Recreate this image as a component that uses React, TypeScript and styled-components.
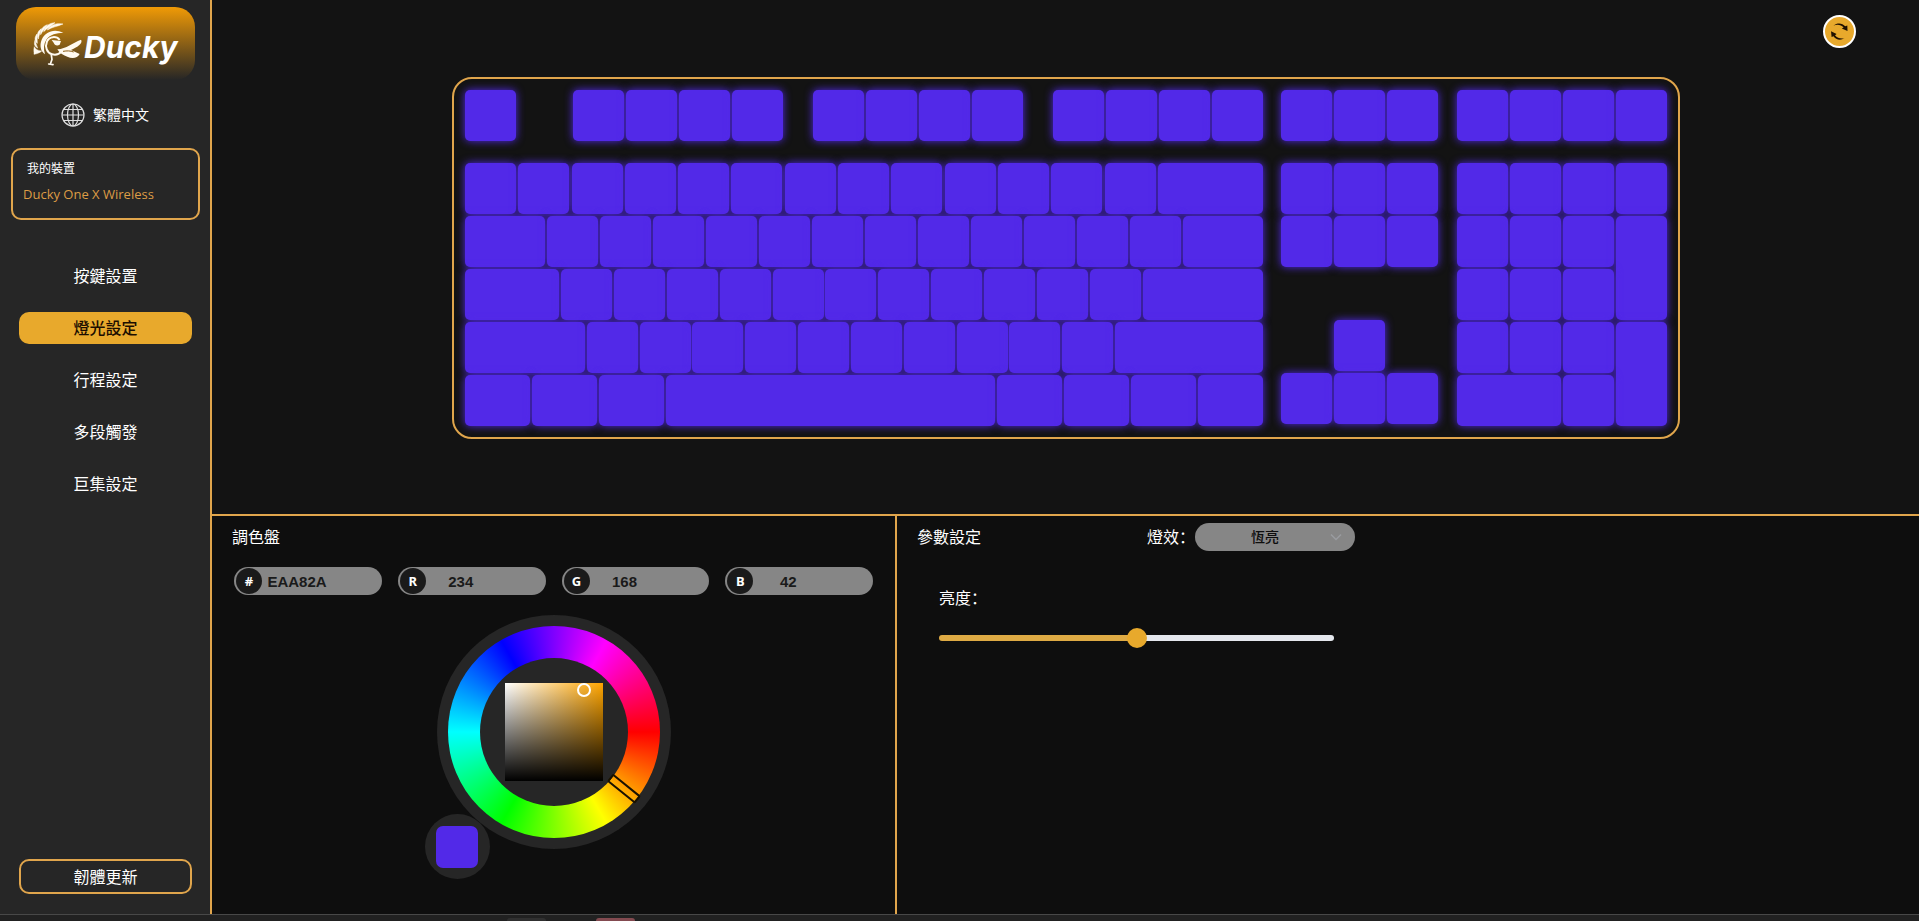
import React, { useState } from "react";
import styled, { createGlobalStyle } from "styled-components";

const ORANGE = "#e8a92c";
const LINE = "#e0a54c";
const KEY_COLOR = "#5229e8";
const LATIN = `"Noto Sans"`;

const GlobalStyle = createGlobalStyle`
  *, *::before, *::after { box-sizing: border-box; }
  body {
    margin: 0;
    background: #0e0e0e;
    color: #fff;
    font-family: ${LATIN}, "Noto Sans CJK TC", sans-serif;
    font-size: 16px;
    line-height: 24px;
  }
  button, input, select { font: inherit; color: inherit; margin: 0; }
  button { padding: 0; border: 0; cursor: pointer; }
`;

const Shell = styled.div`
  display: flex;
  flex-direction: column;
  min-height: 100vh;
`;

const Workspace = styled.div`
  flex: 1;
  display: flex;
`;

/* ---------- sidebar ---------- */

const Sidebar = styled.aside`
  flex: 0 0 212px;
  display: flex;
  flex-direction: column;
  align-items: stretch;
  background: #262626;
  border-right: 2px solid ${LINE};
  padding: 7px 0 20px;
`;

const Logo = styled.div`
  display: flex;
  align-items: center;
  gap: 2px;
  height: 73px;
  margin: 0 15px 0 16px;
  padding-left: 17px;
  border-radius: 20px;
  background: linear-gradient(#f09a06, #262626);
`;

const LogoName = styled.span`
  font: italic 700 30px/40px Inter, "Open Sans", sans-serif;
  padding-top: 6px;
`;

const Language = styled.button`
  display: flex;
  align-items: center;
  justify-content: center;
  gap: 8px;
  height: 24px;
  margin-top: 23px;
  background: none;
  font-size: 14px;
`;

const Device = styled.section`
  margin: 21px 10px 0 11px;
  height: 72px;
  padding: 7px 10px;
  border: 2px solid ${LINE};
  border-radius: 10px;
`;

const DeviceTitle = styled.h2`
  margin: 0 0 0 4px;
  font-size: 12px;
  font-weight: 400;
  line-height: 24px;
`;

const DeviceName = styled.p`
  margin: 0;
  color: #dd9c45;
  font-family: "Open Sans", sans-serif;
  font-size: 13px;
  line-height: 26px;
  white-space: nowrap;
`;

const Nav = styled.nav`
  display: flex;
  flex-direction: column;
  gap: 20px;
  margin: 40px 18px 0 19px;
`;

const NavItem = styled.a<{ $active?: boolean }>`
  height: 32px;
  border-radius: 10px;
  text-align: center;
  text-decoration: none;
  line-height: 32px;
  color: ${(p) => (p.$active ? "#1c0e00" : "#fff")};
  background: ${(p) => (p.$active ? ORANGE : "transparent")};
  font-weight: ${(p) => (p.$active ? 500 : 400)};
`;

const Firmware = styled.button`
  height: 35px;
  margin: auto 18px 0 19px;
  border: 2px solid ${LINE};
  border-radius: 10px;
  background: transparent;
`;

/* ---------- keyboard ---------- */

const Main = styled.main`
  flex: 1;
  min-width: 0;
  display: flex;
  flex-direction: column;
`;

const Stage = styled.section`
  position: relative;
  display: flex;
  justify-content: center;
  padding: 77px 16px 75px 17px;
  background: #131313;
`;

const Refresh = styled.button`
  position: absolute;
  top: 15px;
  right: 63px;
  width: 33px;
  height: 33px;
  display: grid;
  place-items: center;
  border: 2px solid #fff;
  border-radius: 50%;
  background: ${ORANGE};
`;

const Board = styled.div`
  display: flex;
  gap: 18px;
  padding: 11px;
  border: 2px solid ${LINE};
  border-radius: 20px;
`;

const Block = styled.div<{ $width: number }>`
  width: ${(p) => p.$width}px;
  display: flex;
  flex-direction: column;
  gap: 22px;
`;

const Rows = styled.div`
  display: flex;
  flex-direction: column;
  gap: 2px;
`;

const Row = styled.div`
  display: flex;
  justify-content: space-between;
`;

const Functions = styled.div`
  display: flex;
  gap: 30px;
`;

const FunctionGroup = styled.div`
  display: flex;
  gap: 2px;

  &:first-child { margin-right: 27px; }
`;

const PadGrid = styled.div<{ $columns: number }>`
  display: grid;
  grid-template-columns: repeat(${(p) => p.$columns}, 51px);
  grid-auto-rows: 51px;
  gap: 2px;
`;

const Arrows = styled(PadGrid)`
  margin-top: 31px;

  & > :first-child { grid-column: 2; }
  & > :nth-child(2) { grid-column: 1; }
`;

const Key = styled.button<{ $width?: number; $span?: string }>`
  flex: none;
  width: ${(p) => (p.$span ? "auto" : `${p.$width ?? 51}px`)};
  height: ${(p) => (p.$span ? "auto" : "51px")};
  grid-area: ${(p) => p.$span ?? "auto"};
  border-radius: 5px;
  background: ${KEY_COLOR};
  box-shadow: 0 0 8px ${KEY_COLOR};
`;

/* ---------- lower panels ---------- */

const Panels = styled.div`
  flex: 1;
  display: grid;
  grid-template-columns: minmax(685px, 40fr) 60fr;
  border-top: 2px solid ${LINE};
`;

const Panel = styled.section`
  display: flex;
  flex-direction: column;
  background: #0e0e0e;
`;

const PalettePanel = styled(Panel)`
  border-right: 2px solid ${LINE};
  padding: 9px 20px 28px;
`;

const PanelTitle = styled.h2`
  margin: 0;
  font-size: 16px;
  font-weight: 400;
  line-height: 24px;
`;

const Fields = styled.div`
  display: grid;
  grid-template-columns: repeat(4, 1fr);
  gap: 16px;
  margin: 18px 2px 0;
`;

const Field = styled.label`
  display: flex;
  align-items: center;
  height: 28px;
  padding: 1px 1px 1px 2px;
  border-radius: 14px;
  background: #868686;
`;

const FieldTag = styled.span`
  flex: 0 0 26px;
  height: 26px;
  border-radius: 50%;
  background: #1a1a1a;
  text-align: center;
  font-size: 13px;
  font-weight: 700;
  line-height: 26px;
`;

const FieldInput = styled.input`
  width: 70px;
  height: 26px;
  border: 0;
  padding: 0;
  outline: 0;
  background: transparent;
  color: #1a1a1a;
  text-align: center;
  font: 700 15px "Liberation Sans", sans-serif;
`;

const Wheel = styled.div`
  position: relative;
  display: grid;
  place-items: center;
  width: 234px;
  height: 234px;
  margin: 20px auto 0;
  border-radius: 50%;
  background: #262626;
`;

const HueRing = styled.div`
  display: grid;
  place-items: center;
  width: 212px;
  height: 212px;
  border-radius: 50%;
  background: conic-gradient(from 90deg, #f00, #ff0, #0f0, #0ff, #00f, #f0f, #f00);
`;

const WheelCore = styled.div`
  display: grid;
  place-items: center;
  width: 148px;
  height: 148px;
  border-radius: 50%;
  background: #262626;
`;

const Shade = styled.div`
  position: relative;
  width: 98px;
  height: 98px;
  background: linear-gradient(transparent, #000), linear-gradient(90deg, #fff, #ffa500);
`;

const ShadeCursor = styled.span`
  position: absolute;
  top: 0;
  left: 72px;
  width: 14px;
  height: 14px;
  border: 2px solid #fff;
  border-radius: 50%;
`;

const HueCursor = styled.span`
  position: absolute;
  top: 112px;
  left: 189px;
  width: 36px;
  height: 10px;
  border: 2px solid #1a1200;
  border-radius: 2px;
  transform-origin: -72px 50%;
  transform: rotate(39deg);
`;

const Swatch = styled.div`
  position: absolute;
  left: -12px;
  top: 199px;
  width: 65px;
  height: 65px;
  display: grid;
  place-items: center;
  border-radius: 50%;
  background: #262626;
`;

const SwatchColor = styled.button`
  width: 42px;
  height: 42px;
  border-radius: 7px;
  background: ${KEY_COLOR};
`;

const SettingsPanel = styled(Panel)`
  padding: 7px 20px;
`;

const SettingsHead = styled.div`
  display: flex;
  align-items: center;
  height: 28px;
`;

const SettingLabel = styled.label`
  font-family: ${LATIN}, "Noto Sans CJK SC", sans-serif;
  font-size: 16px;
  line-height: 24px;
`;

const EffectGroup = styled.div`
  display: flex;
  align-items: center;
  margin-left: 166px;
`;

const SelectBox = styled.div`
  position: relative;
`;

const EffectSelect = styled.select`
  appearance: none;
  display: block;
  width: 160px;
  height: 28px;
  padding: 0 20px 0 0;
  border: 0;
  border-radius: 14px;
  background: #868686;
  color: #0e0e0e;
  font-size: 14px;
  font-weight: 500;
  text-align: center;
  text-align-last: center;
`;

const Chevron = styled.svg`
  position: absolute;
  top: 8px;
  right: 13px;
  pointer-events: none;
`;

const Brightness = styled.div`
  display: flex;
  flex-direction: column;
  align-items: flex-start;
  gap: 18px;
  margin: 35px 22px 0;
`;

const Slider = styled.input`
  appearance: none;
  width: 395px;
  height: 20px;
  background: transparent;

  &::-webkit-slider-runnable-track {
    height: 6px;
    border-radius: 3px;
    background: linear-gradient(
      90deg,
      #deaa44 var(--level),
      #e4e7ed var(--level)
    );
  }
  &::-webkit-slider-thumb {
    appearance: none;
    width: 20px;
    height: 20px;
    margin-top: -7px;
    border-radius: 50%;
    background: ${ORANGE};
  }
`;

const Dock = styled.footer`
  display: flex;
  align-items: flex-end;
  gap: 50px;
  height: 7px;
  padding-left: 507px;
  border-top: 1px solid #484848;
  background: #212121;
`;

const DockTab = styled.span<{ $color: string }>`
  width: 39px;
  height: 3px;
  border-radius: 3px 3px 0 0;
  background: ${(p) => p.$color};
`;

/* ---------- drawings ---------- */

const DuckMark = () => (
  <svg width="49" height="44" viewBox="98 64 147 132" fill="#fffaf0" aria-hidden="true">
    <g stroke="#fffaf0" strokeWidth="1.5" strokeLinejoin="round">
      <path d="M188 70C166 66 148 74 141 88C155 79 170 78 188 70Z" />
      <path d="M164 66C146 67 133 78 130 93C141 82 152 76 164 66Z" />
      <path d="M141 72C126 77 119 90 121 102C127 90 134 83 141 72Z" />
      <path d="M123 84C111 92 108 105 114 115C116 103 119 97 123 84Z" />
      <path d="M110 100C102 110 102 121 111 128C110 118 111 110 110 100Z" />
      <path d="M104 119C100 130 103 138 112 142C108 133 107 128 104 119Z" />
      <path d="M102 138C99 148 102 155 101 161C111 159 119 156 124 151C112 150 106 146 102 138Z" />
    </g>
    <path d="M189 97C162 82 134 94 124 117C117 135 121 151 134 161C129 144 130 129 138 117C150 101 168 97 189 97Z" />
    <path
      d="M178 118C168 105 147 107 140 122C133 139 140 157 155 161C167 164 178 159 183 153"
      fill="none"
      stroke="#fffaf0"
      strokeWidth="6"
    />
    <path d="M154 118L182 121L178 132C170 137 162 133 160 126Z" />
    <path d="M171 146C198 144 217 127 242 117C247 125 240 136 212 148L238 160C232 172 216 175 201 168C190 164 178 158 171 146Z" />
    <path d="M188 152C200 150 210 150 220 154" fill="none" stroke="#8a5a10" strokeWidth="3" />
    <path d="M153 163L155 176L151 188M145 190L158 192" fill="none" stroke="#fffaf0" strokeWidth="5" strokeLinecap="round" />
  </svg>
);

const Globe = () => (
  <svg width="24" height="24" viewBox="0 0 24 24" fill="none" stroke="#dedede" strokeWidth="1.2" aria-hidden="true">
    <circle cx="12" cy="12" r="11" />
    <ellipse cx="12" cy="12" rx="5.5" ry="11" />
    <path d="M12 1v22M1 12h22M3 6.5h18M3 17.5h18" />
  </svg>
);

const RefreshIcon = () => (
  <svg width="21" height="21" viewBox="0 0 21 21" fill="#1f1000" aria-hidden="true">
    <path d="M4.500 4.500C8.500 1.300 13.500 2 16.200 5.300L18.300 4.400L18.500 10L12.800 7.600L14.600 6.400C12 3.600 8.500 2.900 4.500 4.500Z" />
    <path d="M15.500 17.300C11.500 19.800 6.800 18.800 4.500 15.300L2.600 16L2 10.300L7.600 13L6 14.200C8.200 17 11.500 18 15.500 17.300Z" />
  </svg>
);

/* ---------- data ---------- */

type KeyDef = [name: string, width?: number];

const singles = (names: string): KeyDef[] => names.split(" ").map((n) => [n]);

const FUNCTION_GROUPS = ["Esc", "F1 F2 F3 F4", "F5 F6 F7 F8", "F9 F10 F11 F12"];

const MAIN_ROWS: KeyDef[][] = [
  [...singles("` 1 2 3 4 5 6 7 8 9 0 - ="), ["Backspace", 105]],
  [["Tab", 80], ...singles("Q W E R T Y U I O P [ ]"), ["\\", 80]],
  [["Caps Lock", 94], ...singles("A S D F G H J K L ; '"), ["Enter", 120]],
  [["Left Shift", 120], ...singles("Z X C V B N M , . /"), ["Right Shift", 148]],
  [
    ["Left Ctrl", 65],
    ["Left Win", 65],
    ["Left Alt", 65],
    ["Space", 329],
    ["Right Alt", 65],
    ["Right Win", 65],
    ["Fn", 65],
    ["Right Ctrl", 65],
  ],
];

const NUMPAD: [name: string, span?: string][] = [
  ["Num Lock"], ["Num /"], ["Num *"], ["Num -"],
  ["Num 7"], ["Num 8"], ["Num 9"], ["Num +", "2 / 4 / span 2 / span 1"],
  ["Num 4"], ["Num 5"], ["Num 6"],
  ["Num 1"], ["Num 2"], ["Num 3"], ["Num Enter", "4 / 4 / span 2 / span 1"],
  ["Num 0", "5 / 1 / span 1 / span 2"], ["Num ."],
];

const NAV_ITEMS = ["按鍵設置", "燈光設定", "行程設定", "多段觸發", "巨集設定"];

const COLOR_FIELDS = [
  ["#", "EAA82A"],
  ["R", "234"],
  ["G", "168"],
  ["B", "42"],
];

const keyCaps = (names: string) =>
  names.split(" ").map((name) => <Key key={name} type="button" aria-label={name} />);

const Keyboard = () => (
  <Board>
    <Block $width={798}>
      <Functions>
        {FUNCTION_GROUPS.map((names) => (
          <FunctionGroup key={names}>{keyCaps(names)}</FunctionGroup>
        ))}
      </Functions>
      <Rows>
        {MAIN_ROWS.map((row, i) => (
          <Row key={i}>
            {row.map(([name, width]) => (
              <Key key={name} type="button" $width={width} aria-label={name} />
            ))}
          </Row>
        ))}
      </Rows>
    </Block>
    <Block $width={158}>
      <PadGrid $columns={3}>{keyCaps("PrintScreen ScrollLock Pause")}</PadGrid>
      <PadGrid $columns={3}>{keyCaps("Insert Home PageUp Delete End PageDown")}</PadGrid>
      <Arrows $columns={3}>{keyCaps("Up Left Down Right")}</Arrows>
    </Block>
    <Block $width={210}>
      <PadGrid $columns={4}>{keyCaps("Calculator Mute VolumeDown VolumeUp")}</PadGrid>
      <PadGrid $columns={4}>
        {NUMPAD.map(([name, span]) => (
          <Key key={name} type="button" $span={span} aria-label={name} />
        ))}
      </PadGrid>
    </Block>
  </Board>
);

export default function App() {
  const [active, setActive] = useState(1);
  const [level, setLevel] = useState(50);
  const [fields, setFields] = useState(COLOR_FIELDS.map(([, value]) => value));

  return (
    <>
      <GlobalStyle />
      <Shell>
        <Workspace>
          <Sidebar>
            <Logo>
              <DuckMark />
              <LogoName>Ducky</LogoName>
            </Logo>
            <Language type="button">
              <Globe />
              繁體中文
            </Language>
            <Device>
              <DeviceTitle>我的裝置</DeviceTitle>
              <DeviceName>Ducky One X Wireless</DeviceName>
            </Device>
            <Nav>
              {NAV_ITEMS.map((item, i) => (
                <NavItem key={item} href="#" $active={i === active} onClick={() => setActive(i)}>
                  {item}
                </NavItem>
              ))}
            </Nav>
            <Firmware type="button">韌體更新</Firmware>
          </Sidebar>

          <Main>
            <Stage>
              <Keyboard />
              <Refresh type="button" aria-label="重新整理">
                <RefreshIcon />
              </Refresh>
            </Stage>

            <Panels>
              <PalettePanel>
                <PanelTitle>調色盤</PanelTitle>
                <Fields>
                  {COLOR_FIELDS.map(([tag], i) => (
                    <Field key={tag}>
                      <FieldTag>{tag}</FieldTag>
                      <FieldInput
                        value={fields[i]}
                        onChange={(e) => setFields(fields.map((f, n) => (n === i ? e.target.value : f)))}
                      />
                    </Field>
                  ))}
                </Fields>
                <Wheel>
                  <HueRing>
                    <WheelCore>
                      <Shade>
                        <ShadeCursor />
                      </Shade>
                    </WheelCore>
                  </HueRing>
                  <HueCursor />
                  <Swatch>
                    <SwatchColor type="button" aria-label="調色盤" />
                  </Swatch>
                </Wheel>
              </PalettePanel>

              <SettingsPanel>
                <SettingsHead>
                  <PanelTitle>參數設定</PanelTitle>
                  <EffectGroup>
                    <SettingLabel htmlFor="effect">燈效：</SettingLabel>
                    <SelectBox>
                      <EffectSelect id="effect">
                        <option>恆亮</option>
                      </EffectSelect>
                      <Chevron width="12" height="12" viewBox="0 0 12 12" fill="none" stroke="#9a9ca0" strokeWidth="1.500">
                        <path d="M1 3.500l5 5 5-5" />
                      </Chevron>
                    </SelectBox>
                  </EffectGroup>
                </SettingsHead>
                <Brightness>
                  <SettingLabel htmlFor="brightness">亮度：</SettingLabel>
                  <Slider
                    id="brightness"
                    type="range"
                    min={0}
                    max={100}
                    value={level}
                    onChange={(e) => setLevel(Number(e.target.value))}
                    style={{ "--level": `${level}%` } as React.CSSProperties}
                  />
                </Brightness>
              </SettingsPanel>
            </Panels>
          </Main>
        </Workspace>
        <Dock>
          <DockTab $color="#303030" />
          <DockTab $color="#834a50" />
        </Dock>
      </Shell>
    </>
  );
}
